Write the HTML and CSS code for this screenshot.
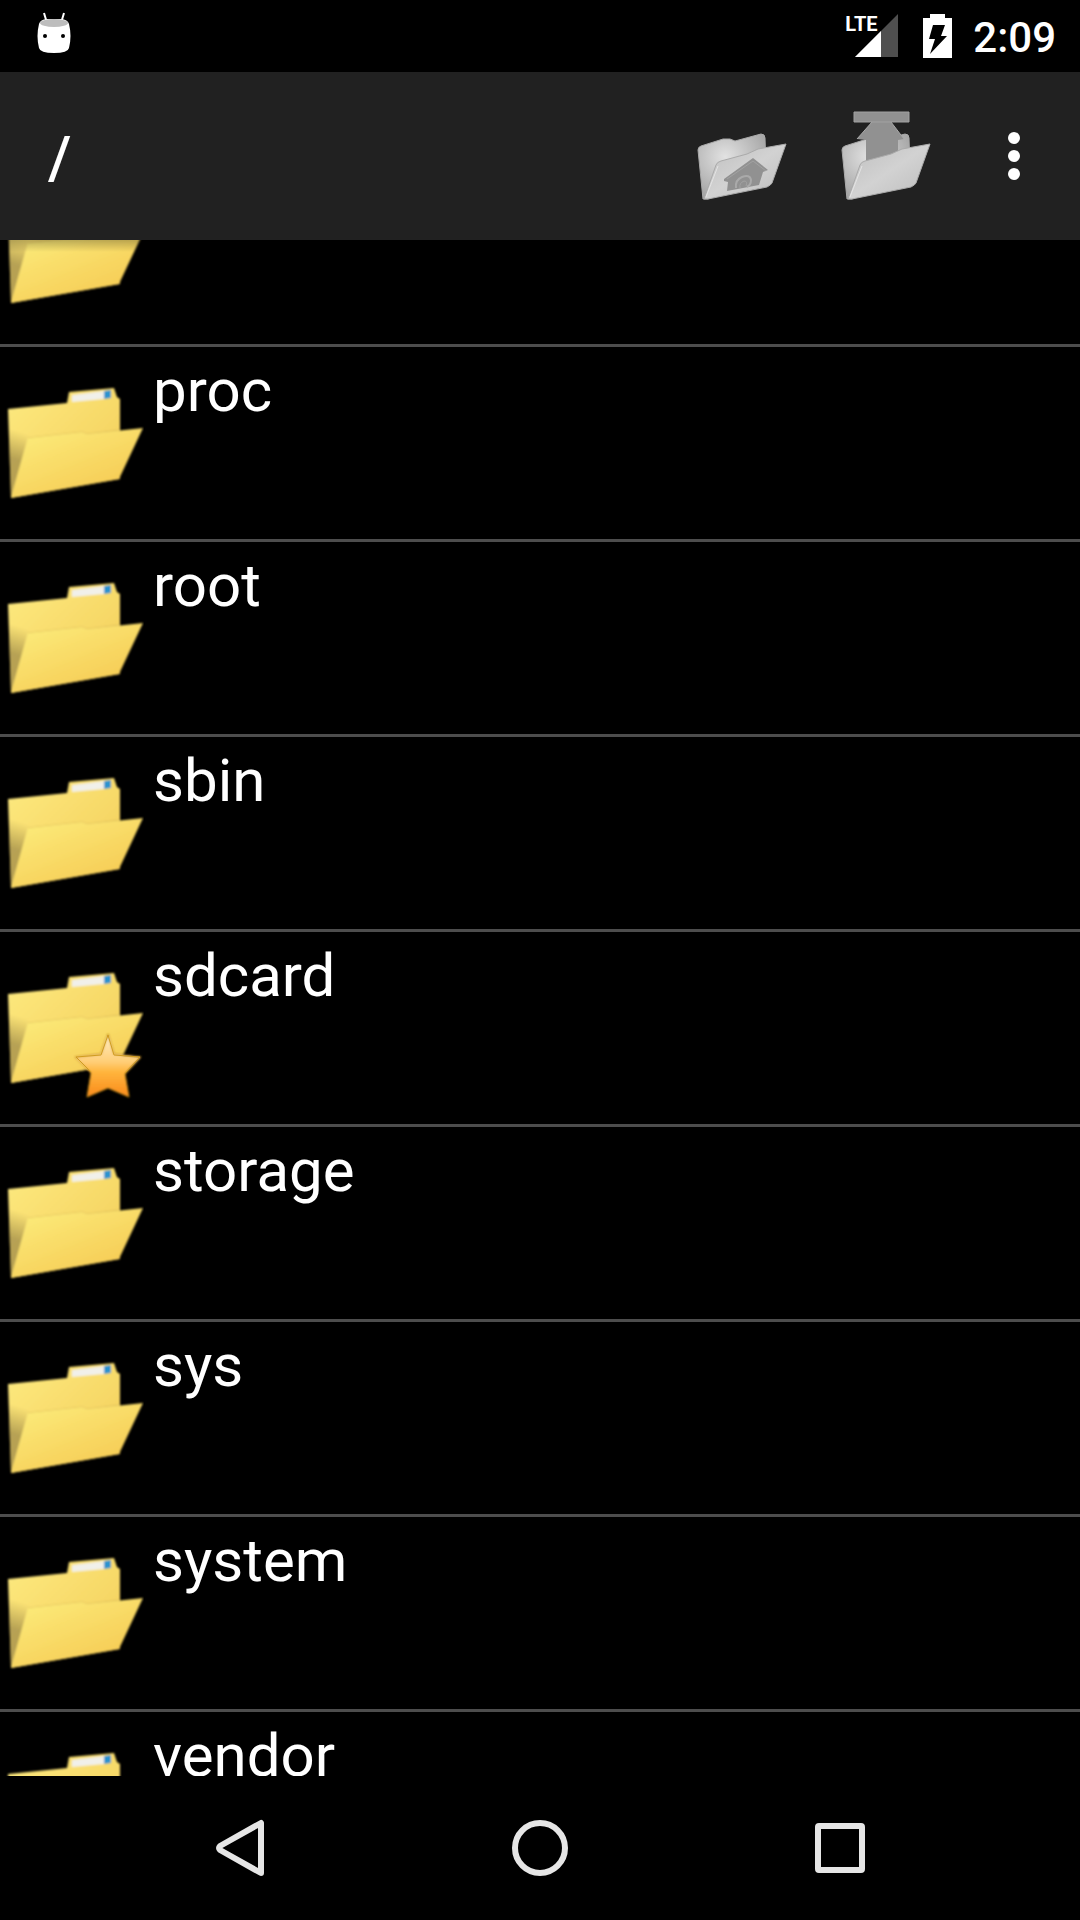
FILE: index.html
```html
<!DOCTYPE html>
<html lang="en">
<head>
<meta charset="utf-8">
<meta name="viewport" content="width=device-width, initial-scale=1">
<title>File manager</title>
<link rel="stylesheet" href="styles.css">
</head>
<body>
<svg class="defs" aria-hidden="true">
  <defs>
    <linearGradient id="back" x1="0" y1="0" x2="1" y2="1"><stop offset="0" stop-color="#fdea80"/><stop offset="1" stop-color="#f3cc56"/></linearGradient>
    <linearGradient id="shade" gradientUnits="userSpaceOnUse" x1="24" y1="62" x2="12" y2="100"><stop offset="0" stop-color="#806f3c" stop-opacity="0"/><stop offset="0.7" stop-color="#806f3c" stop-opacity="0.55"/></linearGradient>
    <linearGradient id="front" x1="0.1" y1="0.1" x2="0.8" y2="1"><stop offset="0" stop-color="#fbea79"/><stop offset="1" stop-color="#f6c850"/></linearGradient>
    <linearGradient id="gold" x1="0" y1="0" x2="0" y2="1"><stop offset="0" stop-color="#fff0c8"/><stop offset="0.45" stop-color="#ffcd75"/><stop offset="0.6" stop-color="#ffb53d"/><stop offset="1" stop-color="#fa8a1c"/></linearGradient>
    <radialGradient id="greyback" cx="0.4" cy="0.35" r="0.7"><stop offset="0" stop-color="#e2e2e2"/><stop offset="1" stop-color="#a2a2a2"/></radialGradient>
    <linearGradient id="greyfront" x1="0" y1="0" x2="1" y2="1"><stop offset="0" stop-color="#bebebe"/><stop offset="0.5" stop-color="#d2d2d2"/><stop offset="1" stop-color="#bdbdbd"/></linearGradient>
    <filter id="soft"><feGaussianBlur stdDeviation="1"/></filter>
    <symbol id="folder" viewBox="0 0 144 144">
      <g filter="url(#soft)">
        <path fill="url(#back)" d="M8 38 67 32 69 21 114 17 117 26 120 28V108L11 127Z"/>
        <path fill="url(#shade)" d="M8 38 28 36V66L11 127Z"/>
        <path fill="#f1f0ea" d="M72 24 104 20V28L72 31Z"/>
        <path fill="#2c93cf" d="M104 20 111 19V27L104 28Z"/>
        <path fill="none" stroke="#d9b858" d="M28 67 82 61 87 63 120 59"/>
        <path fill="url(#front)" d="M28 67 82 61 87 63 143 57 119 108 11 127Z"/>
      </g>
    </symbol>
    <symbol id="star" viewBox="0 0 144 144">
      <path filter="url(#soft)" fill="url(#gold)" stroke="#c18816" stroke-width="1" d="M108 78 114 98 141 101 125 118 129 141 108 132 87 141 91 117 75 101 101 98Z"/>
      <path fill="none" stroke="#d19d20" stroke-width="1" stroke-linejoin="round" d="M91 116 76 101 101 99 108 79 114 99 140 101 125 117"/>
    </symbol>
    <symbol id="grey-back" viewBox="0 0 96 96">
      <path fill="url(#greyback)" stroke="#aaa" stroke-linejoin="round" d="M4 42Q4 39 7 38L29 31 36 31 41 33 67 26Q71 26 71 30L72 60 14 91H9Z"/>
    </symbol>
    <symbol id="grey-front" viewBox="0 0 96 96">
      <path fill="url(#greyfront)" stroke="#aaa" stroke-linejoin="round" d="M10 91 22 57Q23 54 27 53L53 46 64 41 92 36 78 75Q77 77 73 79L14 91Z"/>
      <path fill="none" stroke="#e4e4e4" stroke-width="1" d="M12 89 24 58"/>
    </symbol>
  </defs>
</svg>

<header class="status">
  <svg class="droid" viewBox="0 0 36 44" aria-hidden="true">
    <path fill="none" stroke="#fff" stroke-width="2" d="M8 2 11 12M28 2 25 12"/>
    <path fill="#fff" d="M3 13Q4 9 10 8H26Q32 9 33 13Q36 25 33 37Q32 42 18 42Q4 42 3 37Q0 25 3 13Z"/>
    <ellipse cx="18" cy="12" rx="14" ry="4" fill="#bdbdbd"/>
    <circle cx="9" cy="25" r="2" fill="#000"/><circle cx="27" cy="25" r="2" fill="#000"/>
  </svg>
  <span class="signal">
    <svg viewBox="0 0 54 44" aria-hidden="true"><path fill="#4f4f4f" d="M53 0V43H10Z"/><path fill="#fff" d="M36 17V43H10Z"/></svg>
    <span class="lte">LTE</span>
  </span>
  <svg class="battery" viewBox="0 0 30 44" aria-hidden="true"><path fill="#fff" d="M7 0H22V4H29V44H0V4H7Z"/><path fill="#000" d="M10 11H22L18 22H24L7 40 12 25H6Z"/></svg>
  <time class="clock">2:09</time>
</header>

<div class="toolbar">
  <h1>/</h1>
  <button class="tool" aria-label="Home folder">
    <svg viewBox="0 0 96 96"><use href="#grey-back"/><use href="#grey-front"/>
      <path fill="#919191" d="M30 71 59 50 74 62 69 64 65 77 33 83 34 74 30 73Z"/>
      <path fill="none" stroke="#aaa" stroke-width="2" d="M42 80Q41 72 48 69Q56 66 57 72Q57 77 53 79"/>
      <path fill="none" stroke="#a2a2a2" d="M46 80Q45 75 50 73Q54 73 52 78M33 71 59 53 72 63"/>
    </svg>
  </button>
  <button class="tool" aria-label="Parent folder">
    <svg viewBox="0 0 96 96"><use href="#grey-back"/>
      <path fill="#919191" d="M34 14H53L66 31 60 32V56H28V32L19 31Z"/>
      <path fill="none" stroke="#aaa" d="M34 14 19 31M53 14 66 31"/>
      <path fill="#919191" stroke="#a2a2a2" d="M16 4H71V14H16Z"/>
      <use href="#grey-front"/>
    </svg>
  </button>
  <button class="more" aria-label="More options">
    <svg viewBox="0 0 48 48" fill="#fff"><circle cx="24" cy="6" r="6"/><circle cx="24" cy="24" r="6"/><circle cx="24" cy="42" r="6"/></svg>
  </button>
</div>

<main class="files">
  <ul>
    <li><a href="#oem" aria-label="oem"><svg viewBox="0 0 144 144"><use href="#folder"/></svg></a></li>
    <li><a href="#proc"><svg viewBox="0 0 144 144"><use href="#folder"/></svg><span>proc</span></a></li>
    <li><a href="#root"><svg viewBox="0 0 144 144"><use href="#folder"/></svg><span>root</span></a></li>
    <li><a href="#sbin"><svg viewBox="0 0 144 144"><use href="#folder"/></svg><span>sbin</span></a></li>
    <li><a href="#sdcard"><svg viewBox="0 0 144 144"><use href="#folder"/><use href="#star"/></svg><span>sdcard</span></a></li>
    <li><a href="#storage"><svg viewBox="0 0 144 144"><use href="#folder"/></svg><span>storage</span></a></li>
    <li><a href="#sys"><svg viewBox="0 0 144 144"><use href="#folder"/></svg><span>sys</span></a></li>
    <li><a href="#system"><svg viewBox="0 0 144 144"><use href="#folder"/></svg><span>system</span></a></li>
    <li><a href="#vendor"><svg viewBox="0 0 144 144"><use href="#folder"/></svg><span>vendor</span></a></li>
  </ul>
</main>

<nav class="keys">
  <button aria-label="Back"><svg viewBox="0 0 60 60"><path d="M51 5V55L10 32Q8 30 10 28Z"/></svg></button>
  <button aria-label="Home"><svg viewBox="0 0 60 60"><circle cx="30" cy="30" r="25"/></svg></button>
  <button aria-label="Recent apps"><svg viewBox="0 0 60 60"><rect x="8" y="8" width="44" height="44" rx="1"/></svg></button>
</nav>
</body>
</html>
```

FILE: styles.css
```css
* { box-sizing: border-box; }

body {
  margin: 0;
  height: 100vh;
  display: flex;
  flex-direction: column;
  background: #000;
  color: #fff;
  font-family: Roboto, "Noto Sans", sans-serif;
}

svg { display: block; flex: none; }
.defs { position: absolute; width: 0; height: 0; }

button {
  display: flex;
  align-items: center;
  justify-content: center;
  padding: 0;
  border: 0;
  background: none;
  color: inherit;
}

.status {
  flex: none;
  height: 72px;
  display: flex;
  align-items: center;
  padding: 0 24px 0 36px;
}
.droid { width: 36px; height: 44px; margin-bottom: 6px; }
.signal { position: relative; margin-left: auto; }
.signal svg { width: 54px; height: 44px; }
.lte {
  position: absolute;
  top: 0;
  left: 0;
  font: bold 20px/20px "Liberation Sans Narrow", Roboto, sans-serif;
}
.battery { width: 30px; height: 44px; margin: 0 20px 0 24px; }
.clock { padding-top: 4px; font-size: 42px; line-height: 48px; font-weight: 500; }

.toolbar {
  flex: none;
  height: 168px;
  display: flex;
  align-items: stretch;
  padding: 0 10px 0 48px;
  background: #212121;
}
.toolbar h1 {
  flex: 1;
  margin: 0;
  padding-top: 4px;
  align-self: center;
  font-size: 60px;
  line-height: 72px;
  font-weight: 500;
}
.tool { width: 144px; }
.tool svg { width: 96px; height: 96px; }
.more { width: 112px; }
.more svg { width: 48px; height: 48px; }

.files {
  position: relative;
  flex: 1;
  min-height: 0;
  overflow: hidden;
}
/* shadow cast by the toolbar */
.files::before {
  content: "";
  position: absolute;
  inset: 0 0 auto;
  height: 12px;
  background: linear-gradient(rgba(0, 0, 0, 0.25), transparent);
}
/* the list is scrolled part of a row down */
.files ul {
  list-style: none;
  margin: -88px 0 0;
  padding: 0;
}
.files li { border-bottom: 3px solid #4d4d4d; }
.files a {
  display: flex;
  align-items: center;
  gap: 9px;
  height: 192px;
  color: inherit;
  text-decoration: none;
}
.files a svg { width: 144px; height: 144px; }
.files a span {
  align-self: flex-start;
  padding-top: 8px;
  font-size: 60px;
  line-height: 72px;
}

.keys {
  flex: none;
  height: 144px;
  display: grid;
  grid-template-columns: repeat(3, 1fr);
  padding: 0 90px;
}
.keys svg {
  width: 60px;
  height: 60px;
  fill: none;
  stroke: #e6e6e6;
  stroke-width: 6;
  stroke-linejoin: round;
}
```
